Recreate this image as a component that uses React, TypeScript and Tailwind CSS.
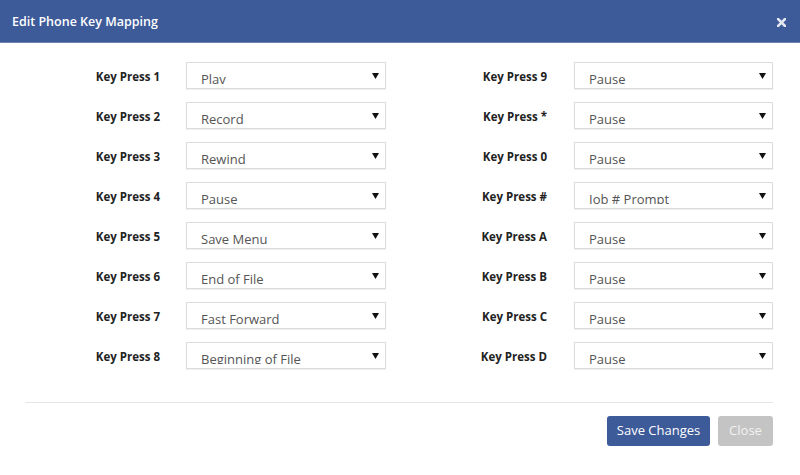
import React from "react";

const left: [string, string][] = [
  ["Key Press 1", "Plav"],
  ["Key Press 2", "Record"],
  ["Key Press 3", "Rewind"],
  ["Key Press 4", "Pause"],
  ["Key Press 5", "Save Menu"],
  ["Key Press 6", "End of File"],
  ["Key Press 7", "Fast Forward"],
  ["Key Press 8", "Beginning of File"],
];
const right: [string, string][] = [
  ["Key Press 9", "Pause"],
  ["Key Press *", "Pause"],
  ["Key Press 0", "Pause"],
  ["Key Press #", "Iob # Prompt"],
  ["Key Press A", "Pause"],
  ["Key Press B", "Pause"],
  ["Key Press C", "Pause"],
  ["Key Press D", "Pause"],
];

function Select({ value, w }: { value: string; w: string }) {
  return (
    <div
      className={`relative h-[27px] ${w} border border-[#dcdcdc] bg-white shadow-[0_1px_1px_rgba(0,0,0,0.06)]`}
    >
      <div className="absolute left-[14px] top-0 h-[21px] overflow-hidden">
        <div className="pt-[7px] text-[13px] leading-[18px] text-[#555] whitespace-nowrap">{value}</div>
      </div>
      <svg className="absolute right-[6px] top-[10px]" width="7" height="6" viewBox="0 0 7 6">
        <path d="M0 0 L7 0 L3.5 6 Z" fill="#111" />
      </svg>
    </div>
  );
}

export default function App() {
  return (
    <div className="w-[800px] h-[475px] bg-white" style={{ fontFamily: "'Open Sans', sans-serif" }}>
      <div className="h-[43px] bg-[#3d5a99] flex items-center justify-between pl-[12px] pr-[14px] border-b border-[#6d84b4]">
        <span className="text-white font-semibold text-[12.5px] pt-[2px]">Edit Phone Key Mapping</span>
        <svg width="9" height="9" viewBox="0 0 9 9" className="mt-[2px]">
          <path d="M1 1 L8 8 M8 1 L1 8" stroke="#e3e7f0" strokeWidth="2.6" strokeLinecap="square" />
        </svg>
      </div>
      <div className="flex pt-[19px]">
        <div className="w-[386px] flex flex-col gap-[13px]">
          {left.map(([l, v]) => (
            <div key={l} className="flex items-center h-[27px]">
              <div className="w-[160px] text-right text-[11.5px] font-bold text-[#222] pt-[3px]">{l}</div>
              <div className="ml-[26px]">
                <Select value={v} w="w-[200px]" />
              </div>
            </div>
          ))}
        </div>
        <div className="flex flex-col gap-[13px]">
          {right.map(([l, v]) => (
            <div key={l} className="flex items-center h-[27px]">
              <div className="w-[161px] text-right text-[11.5px] font-bold text-[#222] pt-[3px]">{l}</div>
              <div className="ml-[27px]">
                <Select value={v} w="w-[199px]" />
              </div>
            </div>
          ))}
        </div>
      </div>
      <div className="mx-[25px] w-[748px] h-px bg-[#e5e5e5] mt-[33px]" />
      <div className="flex justify-end gap-[8px] pr-[27px] mt-[13px]">
        <button className="h-[30px] w-[103px] rounded-[3px] bg-[#3d5a99] text-white text-[13px]">Save Changes</button>
        <button className="h-[30px] w-[55px] rounded-[3px] bg-[#c4c4c4] text-[#f2f2f2] text-[13px]">Close</button>
      </div>
    </div>
  );
}
